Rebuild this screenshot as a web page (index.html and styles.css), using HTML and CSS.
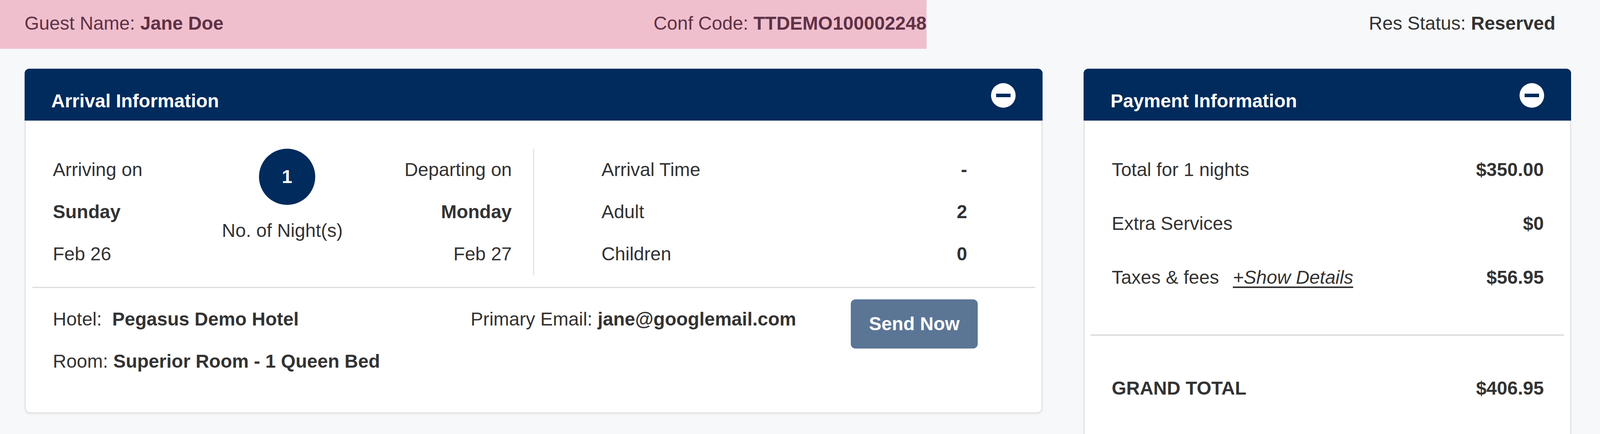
FILE: index.html
```html
<!DOCTYPE html>
<html lang="en">
<head>
<meta charset="utf-8">
<title>Reservation</title>
<link rel="stylesheet" href="styles.css">
</head>
<body>
<div class="page">
  <header class="res-bar">
    <div class="res-highlight">
      <span class="res-item">Guest Name: <b>Jane Doe</b></span>
      <span class="res-item">Conf Code: <b>TTDEMO100002248</b></span>
    </div>
    <div class="res-status"><span class="res-item">Res Status: <b>Reserved</b></span></div>
  </header>

  <main class="cards">
    <section class="card card-arrival">
      <div class="card-head">
        <h2 class="card-title">Arrival Information</h2>
        <span class="collapse-icon"></span>
      </div>
      <div class="card-body arrival-body">
        <div class="stay">
          <div class="stay-dates">
            <div class="date-col">
              <div class="line">Arriving on</div>
              <div class="line strong">Sunday</div>
              <div class="line">Feb 26</div>
            </div>
            <div class="nights">
              <div class="nights-badge">1</div>
              <div class="nights-label">No. of Night(s)</div>
            </div>
            <div class="date-col date-right">
              <div class="line">Departing on</div>
              <div class="line strong">Monday</div>
              <div class="line">Feb 27</div>
            </div>
          </div>
          <div class="vdivider"></div>
          <div class="guests">
            <div class="kv"><span>Arrival Time</span><b>-</b></div>
            <div class="kv"><span>Adult</span><b>2</b></div>
            <div class="kv"><span>Children</span><b>0</b></div>
          </div>
        </div>
        <div class="hdivider"></div>
        <div class="details">
          <div class="detail-col">
            <div class="line">Hotel:&nbsp; <b>Pegasus Demo Hotel</b></div>
            <div class="line">Room: <b>Superior Room - 1 Queen Bed</b></div>
          </div>
          <div class="detail-col detail-email">
            <div class="line">Primary Email: <b>jane@googlemail.com</b></div>
          </div>
          <button class="send-btn" type="button">Send Now</button>
        </div>
      </div>
    </section>

    <section class="card card-payment">
      <div class="card-head">
        <h2 class="card-title">Payment Information</h2>
        <span class="collapse-icon"></span>
      </div>
      <div class="card-body payment-body">
        <div class="pay-list">
          <div class="pay-row"><span>Total for 1 nights</span><b>$350.00</b></div>
          <div class="pay-row"><span>Extra Services</span><b>$0</b></div>
          <div class="pay-row"><span>Taxes &amp; fees <a class="show-details" href="#">+Show Details</a></span><b>$56.95</b></div>
        </div>
        <div class="pay-divider"></div>
        <div class="pay-row pay-total"><b>GRAND TOTAL</b><b>$406.95</b></div>
      </div>
    </section>
  </main>
</div>
</body>
</html>
```

FILE: styles.css
```css
html, body {
  margin: 0;
  padding: 0;
  height: 1112px;
  overflow: hidden;
  background: #f7f8fa;
}

.page {
  font-family: "Liberation Sans", Arial, sans-serif;
  font-size: 48px;
  line-height: 56px;
  color: #333333;
}

b {
  font-weight: 700;
}

/* top reservation bar */
.res-bar {
  display: flex;
  justify-content: space-between;
  height: 125px;
}

.res-highlight {
  width: 57.909vw;
  box-sizing: border-box;
  padding: 0 0 6px 1.533vw;
  background: #f0bfcd;
  color: #5e3246;
  display: flex;
  justify-content: space-between;
  align-items: center;
}

.res-item {
  white-space: nowrap;
}

.res-status {
  display: flex;
  align-items: center;
  padding: 0 2.787vw 6px 0;
}

/* cards */
.cards {
  display: flex;
  align-items: flex-start;
  gap: 2.578vw;
  padding: 51px 0 0 1.533vw;
}

.card-arrival {
  width: 63.624vw;
}

.card-payment {
  width: 30.453vw;
}

.card-head {
  height: 133px;
  box-sizing: border-box;
  background: #002b5c;
  border-radius: 12px 12px 0 0;
  display: flex;
  justify-content: space-between;
  align-items: center;
  padding: 0 1.672vw;
}

.card-title {
  margin: 0;
  padding-top: 32px;
  font-size: 48px;
  line-height: 56px;
  font-weight: 700;
  color: #ffffff;
  white-space: nowrap;
}

.collapse-icon {
  width: 63px;
  height: 63px;
  border-radius: 50%;
  background: #ffffff;
  display: flex;
  align-items: center;
  justify-content: center;
  margin-top: 3px;
  flex-shrink: 0;
}

.collapse-icon::before {
  content: "";
  width: 37px;
  height: 9px;
  background: #002b5c;
}

.card-body {
  background: #ffffff;
  border: 3px solid #e3e5e8;
  border-top: none;
  border-radius: 0 0 14px 14px;
  box-shadow: 0 3px 4px rgba(0, 0, 0, 0.06);
}

/* arrival body */
.arrival-body {
  padding: 72px 0.395vw 76px 0.418vw;
}

.line {
  height: 108px;
  line-height: 108px;
  white-space: nowrap;
}

.strong {
  font-weight: 700;
}

.stay {
  display: flex;
  padding-left: 1.278vw;
  padding-bottom: 30px;
}

.stay-dates {
  width: 28.688vw;
  display: grid;
  grid-template-columns: 1fr auto 1fr;
}

.date-right {
  text-align: right;
}

.nights {
  display: flex;
  flex-direction: column;
  align-items: center;
}

.nights-badge {
  width: 144px;
  height: 144px;
  margin-left: 24px;
  border-radius: 50%;
  background: #002b5c;
  color: #ffffff;
  font-weight: 700;
  display: flex;
  align-items: center;
  justify-content: center;
}

.nights-label {
  margin-top: 12px;
  line-height: 108px;
  white-space: nowrap;
}

.vdivider {
  width: 2px;
  height: 324px;
  margin-left: 1.347vw;
  background: #d9d9d9;
}

.guests {
  width: 22.857vw;
  margin-left: 4.204vw;
}

.kv {
  display: flex;
  justify-content: space-between;
  height: 108px;
  line-height: 108px;
}

.hdivider {
  height: 3px;
  background: #dcdcdc;
}

.details {
  display: flex;
  align-items: flex-start;
  padding: 26px 0 0 1.278vw;
}

.detail-col {
  width: 26.109vw;
}

.detail-email {
  width: 23.763vw;
}

.send-btn {
  width: 325px;
  height: 126px;
  margin-top: 3px;
  border: none;
  border-radius: 12px;
  background: #5b7595;
  color: #ffffff;
  font-family: "Liberation Sans", Arial, sans-serif;
  font-size: 48px;
  font-weight: 700;
  line-height: 120px;
  padding: 0;
}

/* payment body */
.payment-body {
  padding: 72px 0 80px 0;
}

.pay-list {
  display: flex;
  flex-direction: column;
  gap: 30px;
}

.pay-row {
  display: flex;
  justify-content: space-between;
  height: 108px;
  line-height: 108px;
  padding: 0 1.626vw 0 1.672vw;
  white-space: nowrap;
}

.show-details {
  margin-left: 22px;
  color: #333333;
  font-style: italic;
  text-decoration: underline;
  text-decoration-thickness: 4px;
  text-underline-offset: 7px;
}

.pay-divider {
  height: 3px;
  margin: 92px 0.372vw 0 0.35vw;
  background: #d6d6d6;
}

.pay-total {
  margin-top: 81px;
  text-transform: uppercase;
}
```
